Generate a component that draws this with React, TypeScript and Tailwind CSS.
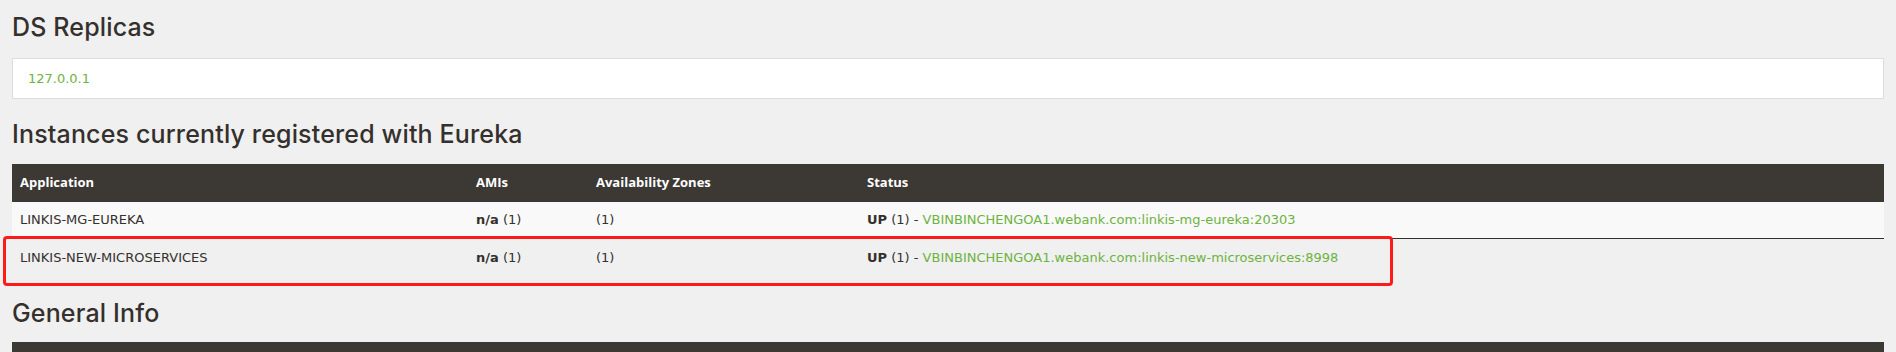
import React from "react";

const rows = [
  { app: "LINKIS-MG-EUREKA", host: "VBINBINCHENGOA1.webank.com:linkis-mg-eureka:20303", striped: true },
  { app: "LINKIS-NEW-MICROSERVICES", host: "VBINBINCHENGOA1.webank.com:linkis-new-microservices:8998", striped: false },
];

const heading =
  "text-[25px] leading-[30px] font-medium tracking-[0.15px] text-[#34302d] font-['Inter',sans-serif]";
const cols = "grid grid-cols-[456px_120px_271px_1fr]";

export default function App() {
  return (
    <div className="relative w-full h-[352px] overflow-hidden bg-[#f0f0f0] px-[12px] font-['DejaVu_Sans',sans-serif] text-[13px] text-[#34302d]">
      <h2 className={`${heading} pt-[12px]`}>DS Replicas</h2>
      <div className="mt-[16px] h-[41px] border border-[#dddddd] bg-white flex items-center px-[15px]">
        <span className="text-[#6db33f]">127.0.0.1</span>
      </div>
      <h2 className={`${heading} mt-[20px]`}>Instances currently registered with Eureka</h2>
      <div className="mt-[15px]">
        <div className={`${cols} h-[38px] items-center bg-[#3c3834] text-white font-bold font-['Open_Sans',sans-serif] text-[13px]`}>
          <div className="px-[8px]">Application</div>
          <div className="px-[8px]">AMIs</div>
          <div className="px-[8px]">Availability Zones</div>
          <div className="px-[8px]">Status</div>
        </div>
        {rows.map((r) => (
          <div
            key={r.app}
            className={`${cols} h-[37px] items-center ${r.striped ? "bg-[#f9f9f9] border-b border-[#34302d]" : ""}`}
          >
            <div className="px-[8px]">{r.app}</div>
            <div className="px-[8px]">
              <span className="font-semibold">n/a</span> (1)
            </div>
            <div className="px-[8px]">(1)</div>
            <div className="px-[8px]">
              <span className="font-semibold">UP</span> (1) - <span className="text-[#6db33f]">{r.host}</span>
            </div>
          </div>
        ))}
      </div>
      <h2 className={`${heading} mt-[22px]`}>General Info</h2>
      <div className="mt-[14px] h-[40px] bg-[#3c3834]" />
      <div className="absolute left-[3px] top-[236px] w-[1390px] h-[50px] border-[3px] border-[#ff1a1a] rounded-[4px] pointer-events-none" />
    </div>
  );
}
